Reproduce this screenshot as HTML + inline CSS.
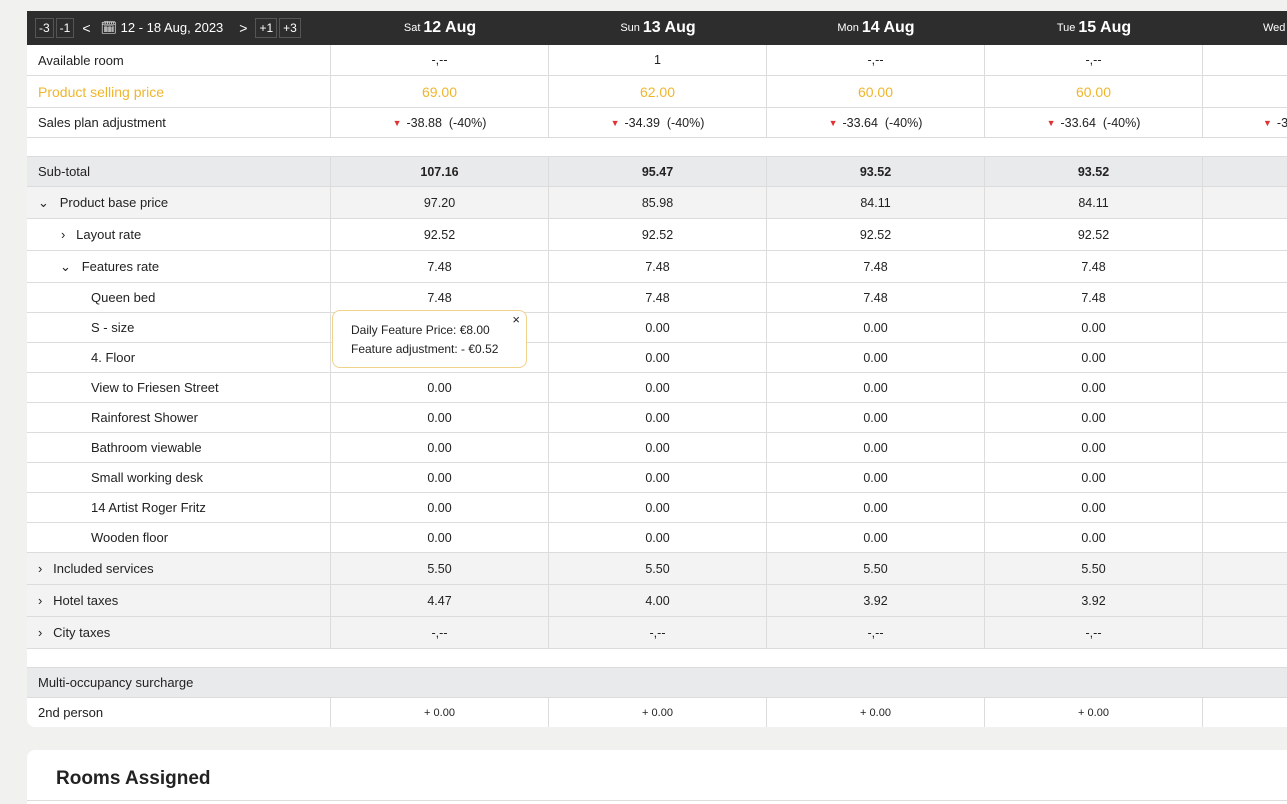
<!DOCTYPE html><html><head><meta charset="utf-8"><style>
*{box-sizing:border-box;margin:0;padding:0}
html,body{width:1287px;height:804px;overflow:hidden}
body{background:#f1f1ef;font-family:"Liberation Sans",sans-serif;color:#222;position:relative}
.wrap{position:absolute;left:27px;top:11px;width:1300px;background:#fff;border-radius:0 0 8px 8px;overflow:hidden}
.r{display:flex;border-bottom:1px solid #dcdcdc;font-size:12.5px;align-items:stretch}
.r>div{display:flex;align-items:center;justify-content:center;border-right:1px solid #dcdcdc;width:218px;white-space:nowrap;overflow:hidden}
.r>div:first-child{width:304px;justify-content:flex-start;padding-left:11px;font-size:13px}
.r>div:last-child{border-right:none;width:120px;justify-content:flex-start;padding-left:60px}
.r>div.full{width:1300px;border:none;padding-left:11px}
.h{background:#2d2d2d;color:#fff;height:34px;border:none}
.h>div{border-right:none!important}
.h .d{font-size:11px}.h .d b{font-size:16px;font-weight:bold;margin-left:3px}
.btn{border:1px solid #555;padding:2px 3px;font-size:12px;margin-right:2px}
.g1{background:#e9eaec}.g2{background:#f3f3f3}
.gap{height:19px;border-bottom:1px solid #dcdcdc}
.y{color:#efb62d;font-size:14px!important}
.red{color:#d33;font-size:9px;margin-right:5px}
.b{font-weight:bold}
.tip{position:absolute;left:332px;top:310px;width:195px;height:58px;border:1px solid #f0d28a;border-radius:8px;background:#fff;font-size:12px;padding:10px 18px;line-height:19px}
.tip span{position:absolute;right:6px;top:-1px;font-size:13px}
.card{position:absolute;left:27px;top:750px;width:1300px;height:80px;background:#fff;border-radius:8px}
.card h2{position:absolute;left:29px;top:18px;font-size:19px}
.card i{position:absolute;left:0;right:0;top:50px;border-top:1px solid #ddd}
</style></head><body>
<div class="wrap">
<div class="r h"><div style="padding-left:8px"><span class="btn">-3</span><span class="btn">-1</span><span style="margin:0 10px 0 6px;font-size:14px">&lt;</span><span style="font-size:13px">🗓 12 - 18 Aug, 2023</span><span style="margin:0 8px 0 16px;font-size:14px">&gt;</span><span class="btn">+1</span><span class="btn">+3</span></div><div class="d">Sat<b>12 Aug</b></div><div class="d">Sun<b>13 Aug</b></div><div class="d">Mon<b>14 Aug</b></div><div class="d">Tue<b>15 Aug</b></div><div class="d">Wed</div></div>
<div class="r" style="height:31px"><div>Available room</div><div>-,--</div><div>1</div><div>-,--</div><div>-,--</div><div></div></div>
<div class="r" style="height:32px"><div class="y">Product selling price</div><div class="y">69.00</div><div class="y">62.00</div><div class="y">60.00</div><div class="y">60.00</div><div></div></div>
<div class="r" style="height:30px"><div>Sales plan adjustment</div><div><span class="red">▼</span>-38.88&nbsp; (-40%)</div><div><span class="red">▼</span>-34.39&nbsp; (-40%)</div><div><span class="red">▼</span>-33.64&nbsp; (-40%)</div><div><span class="red">▼</span>-33.64&nbsp; (-40%)</div><div><span class="red">▼</span>-33</div></div>
<div class="gap"></div>
<div class="r g1" style="height:30px"><div>Sub-total</div><div class="b">107.16</div><div class="b">95.47</div><div class="b">93.52</div><div class="b">93.52</div><div></div></div>
<div class="r g2" style="height:32px"><div>⌄&nbsp;&nbsp; Product base price</div><div>97.20</div><div>85.98</div><div>84.11</div><div>84.11</div><div></div></div>
<div class="r" style="height:32px"><div style="padding-left:34px">›&nbsp;&nbsp; Layout rate</div><div>92.52</div><div>92.52</div><div>92.52</div><div>92.52</div><div></div></div>
<div class="r" style="height:32px"><div style="padding-left:33px">⌄&nbsp;&nbsp; Features rate</div><div>7.48</div><div>7.48</div><div>7.48</div><div>7.48</div><div></div></div>
<div class="r" style="height:30px"><div style="padding-left:64px">Queen bed</div><div>7.48</div><div>7.48</div><div>7.48</div><div>7.48</div><div></div></div>
<div class="r" style="height:30px"><div style="padding-left:64px">S - size</div><div></div><div>0.00</div><div>0.00</div><div>0.00</div><div></div></div>
<div class="r" style="height:30px"><div style="padding-left:64px">4. Floor</div><div></div><div>0.00</div><div>0.00</div><div>0.00</div><div></div></div>
<div class="r" style="height:30px"><div style="padding-left:64px">View to Friesen Street</div><div>0.00</div><div>0.00</div><div>0.00</div><div>0.00</div><div></div></div>
<div class="r" style="height:30px"><div style="padding-left:64px">Rainforest Shower</div><div>0.00</div><div>0.00</div><div>0.00</div><div>0.00</div><div></div></div>
<div class="r" style="height:30px"><div style="padding-left:64px">Bathroom viewable</div><div>0.00</div><div>0.00</div><div>0.00</div><div>0.00</div><div></div></div>
<div class="r" style="height:30px"><div style="padding-left:64px">Small working desk</div><div>0.00</div><div>0.00</div><div>0.00</div><div>0.00</div><div></div></div>
<div class="r" style="height:30px"><div style="padding-left:64px">14 Artist Roger Fritz</div><div>0.00</div><div>0.00</div><div>0.00</div><div>0.00</div><div></div></div>
<div class="r" style="height:30px"><div style="padding-left:64px">Wooden floor</div><div>0.00</div><div>0.00</div><div>0.00</div><div>0.00</div><div></div></div>
<div class="r g2" style="height:32px"><div>›&nbsp;&nbsp; Included services</div><div>5.50</div><div>5.50</div><div>5.50</div><div>5.50</div><div></div></div>
<div class="r g2" style="height:32px"><div>›&nbsp;&nbsp; Hotel taxes</div><div>4.47</div><div>4.00</div><div>3.92</div><div>3.92</div><div></div></div>
<div class="r g2" style="height:32px"><div>›&nbsp;&nbsp; City taxes</div><div>-,--</div><div>-,--</div><div>-,--</div><div>-,--</div><div></div></div>
<div class="gap"></div>
<div class="r g1" style="height:30px"><div class="full">Multi-occupancy surcharge</div></div>
<div class="r" style="height:29px;border:none"><div>2nd person</div><div style="font-size:11px">+ 0.00</div><div style="font-size:11px">+ 0.00</div><div style="font-size:11px">+ 0.00</div><div style="font-size:11px">+ 0.00</div><div></div></div>
</div>
<div class="tip"><span>×</span>Daily Feature Price: €8.00<br>Feature adjustment: - €0.52</div>
<div class="card"><h2>Rooms Assigned</h2><i></i></div>
</body></html>
